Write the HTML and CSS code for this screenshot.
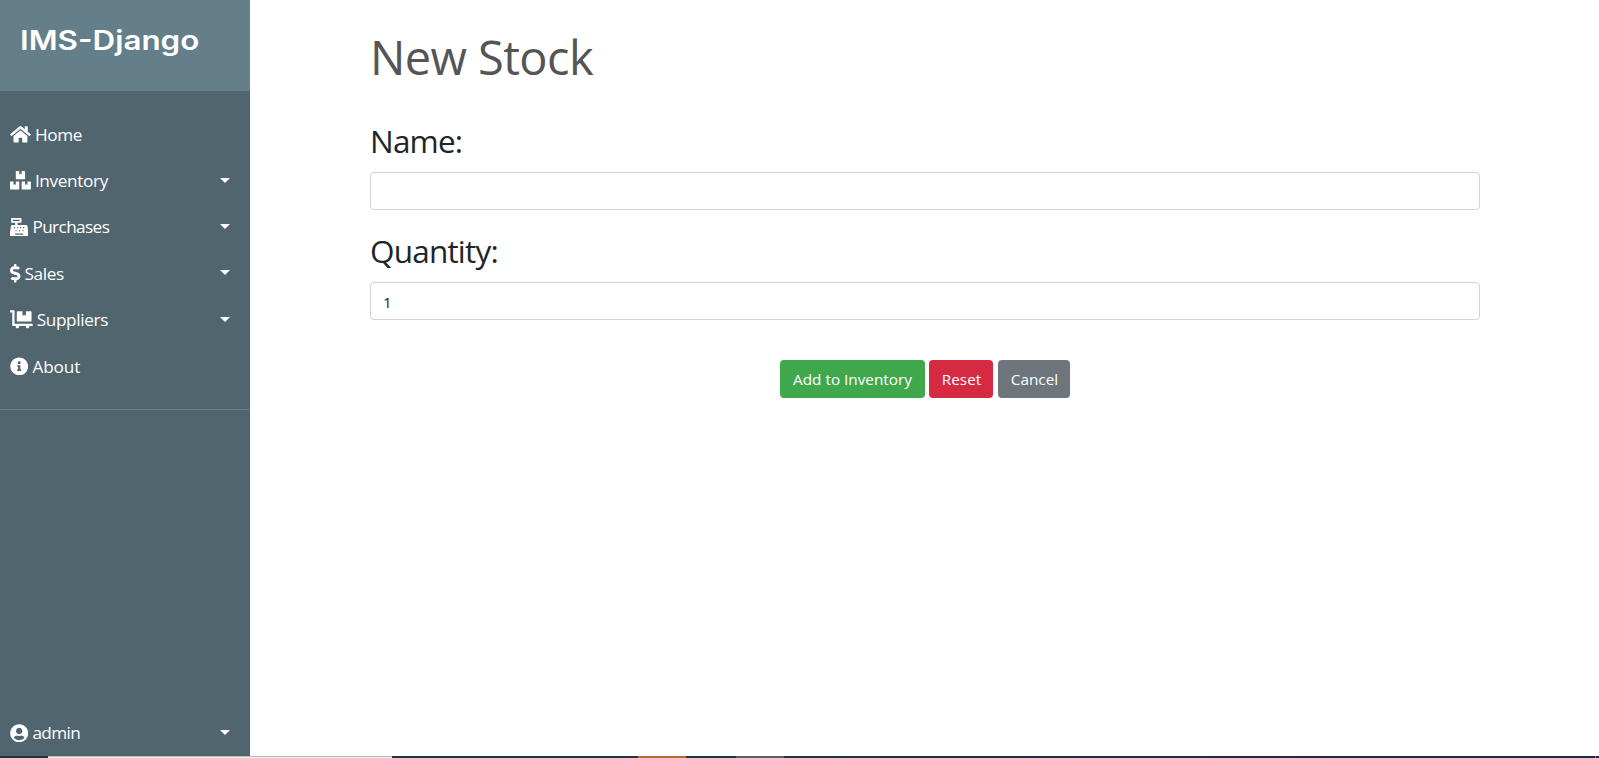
FILE: index.html
```html
<!DOCTYPE html>
<html lang="en">
<head>
<meta charset="utf-8">
<title>IMS-Django</title>
<link rel="stylesheet" href="styles.css">
</head>
<body>
<div class="wrapper">
  <nav class="sidebar">
    <header class="brand"><span class="brand-name">IMS-Django</span></header>
    <ul class="menu">
      <li><a><svg class="icon w20" viewBox="0 0 576 512"><path d="M280.37 148.26L96 300.11V464a16 16 0 0 0 16 16l112.06-.29a16 16 0 0 0 15.92-16V368a16 16 0 0 1 16-16h64a16 16 0 0 1 16 16v95.64a16 16 0 0 0 16 16.05L464 480a16 16 0 0 0 16-16V300L295.67 148.26a12.19 12.19 0 0 0-15.3 0zM571.6 251.47L488 182.56V44.05a12 12 0 0 0-12-12h-56a12 12 0 0 0-12 12v72.61L318.47 43a48 48 0 0 0-61 0L4.34 251.47a12 12 0 0 0-1.6 16.9l25.5 31A12 12 0 0 0 45.15 301l235.22-193.74a12.19 12.19 0 0 1 15.3 0L530.9 301a12 12 0 0 0 16.9-1.6l25.5-31a12 12 0 0 0-1.7-16.93z"/></svg><span>Home</span></a></li>
      <li><a><svg class="icon w20" viewBox="0 0 576 512"><path d="M560 288h-80v96l-32-21.3-32 21.3v-96h-80c-8.8 0-16 7.2-16 16v192c0 8.8 7.2 16 16 16h224c8.8 0 16-7.2 16-16V304c0-8.800-7.200-16-16-16zm-384-64h224c8.800 0 16-7.200 16-16V16c0-8.800-7.200-16-16-16h-80v96l-32-21.300L256 96V0h-80c-8.800 0-16 7.200-16 16v192c0 8.800 7.200 16 16 16zm64 64h-80v96l-32-21.300L96 384v-96H16c-8.800 0-16 7.200-16 16v192c0 8.800 7.200 16 16 16h224c8.800 0 16-7.200 16-16V304c0-8.800-7.200-16-16-16z"/></svg><span>Inventory</span><i class="caret"></i></a></li>
      <li><a><svg class="icon w18" viewBox="0 0 512 512"><path fill-rule="evenodd" d="M511 378.700l-26.700-160c-2.600-15.400-15.900-26.700-31.600-26.700H208v-64h96c8.800 0 16-7.200 16-16V16c0-8.800-7.200-16-16-16H48c-8.800 0-16 7.200-16 16v96c0 8.800 7.200 16 16 16h96v64H59.100c-15.600 0-29 11.300-31.600 26.700L.8 378.700c-.6 3.500-.9 7-.9 10.500V480c0 17.700 14.300 32 32 32h448c17.700 0 32-14.300 32-32v-90.700c.1-3.500-.2-7.100-.9-10.600zM280 248h32v32h-32zm-32 88h32v32h-32zM80 48h192v32H80zm32 200h32v32h-32zm40 88h32v32h-32zm216 120c0 4.400-3.600 8-8 8H152c-4.400 0-8-3.600-8-8v-16c0-4.400 3.600-8 8-8h208c4.400 0 8 3.600 8 8zM196 248h32v32h-32zm148 88h32v32h-32zm20-88h32v32h-32z"/></svg><span class="tight">Purchases</span><i class="caret"></i></a></li>
      <li><a><svg class="icon w10" viewBox="0 0 288 512"><path d="M209.200 233.400l-108-31.600C88.700 198.200 80 186.500 80 173.500c0-16.300 13.200-29.500 29.500-29.500h66.300c12.200 0 24.200 3.700 34.200 10.500 6.100 4.100 14.300 3.100 19.500-2l34.800-34c7.100-6.900 6.100-18.400-1.800-24.500C238 74.800 207.400 64.100 176 64V16c0-8.800-7.200-16-16-16h-32c-8.800 0-16 7.200-16 16v48h-2.500C45.800 64-5.400 118.700.5 183.600c4.200 46.100 39.400 83.600 83.800 96.600l102.500 30c12.500 3.700 21.200 15.300 21.200 28.300 0 16.300-13.200 29.500-29.500 29.500h-66.300C100 368 88 364.300 78 357.500c-6.100-4.100-14.300-3.100-19.500 2l-34.800 34c-7.100 6.900-6.100 18.400 1.800 24.500 24.500 19.200 55.100 29.900 86.500 30v48c0 8.800 7.200 16 16 16h32c8.800 0 16-7.200 16-16v-48.200c46.600-.9 90.300-28.600 105.700-72.700 21.500-61.600-14.600-124.800-72.500-141.700z"/></svg><span>Sales</span><i class="caret"></i></a></li>
      <li><a><svg class="icon w22" viewBox="0 0 640 512"><path d="M208 320h384c8.800 0 16-7.200 16-16V48c0-8.800-7.200-16-16-16H448v128l-48-32-48 32V32H208c-8.800 0-16 7.200-16 16v256c0 8.800 7.200 16 16 16zm416 64H128V16c0-8.800-7.200-16-16-16H16C7.200 0 0 7.200 0 16v32c0 8.800 7.200 16 16 16h48v368c0 8.800 7.200 16 16 16h82.900c-1.800 5-2.900 10.400-2.900 16 0 26.500 21.500 48 48 48s48-21.500 48-48c0-5.600-1.200-11-2.900-16H451c-1.800 5-2.900 10.400-2.900 16 0 26.500 21.500 48 48 48s48-21.500 48-48c0-5.600-1.200-11-2.900-16H624c8.800 0 16-7.200 16-16v-32c0-8.800-7.200-16-16-16z"/></svg><span>Suppliers</span><i class="caret"></i></a></li>
      <li><a><svg class="icon w18" viewBox="0 0 512 512"><path d="M256 8C119 8 8 119.100 8 256c0 137 111 248 248 248s248-111 248-248C504 119.100 393 8 256 8zm0 110c23.200 0 42 18.800 42 42s-18.800 42-42 42-42-18.800-42-42 18.800-42 42-42zm56 254c0 6.600-5.400 12-12 12h-88c-6.600 0-12-5.400-12-12v-24c0-6.600 5.400-12 12-12h12v-64h-12c-6.600 0-12-5.400-12-12v-24c0-6.600 5.400-12 12-12h64c6.600 0 12 5.400 12 12v100h12c6.600 0 12 5.400 12 12z"/></svg><span class="loose">About</span></a></li>
    </ul>
    <div class="account"><a><svg class="icon w18" viewBox="0 0 496 512"><path d="M248 8C111 8 0 119 0 256s111 248 248 248 248-111 248-248S385 8 248 8zm0 96c48.600 0 88 39.400 88 88s-39.400 88-88 88-88-39.400-88-88 39.400-88 88-88zm0 344c-58.700 0-111.300-26.600-146.500-68.200 18.800-35.400 55.600-59.800 98.500-59.800 2.400 0 4.800.4 7.100 1.100 13 4.200 26.600 6.900 40.900 6.900 14.300 0 28-2.700 40.900-6.900 2.300-.7 4.700-1.100 7.100-1.100 42.900 0 79.700 24.400 98.500 59.800C359.300 421.400 306.700 448 248 448z"/></svg><span>admin</span><i class="caret"></i></a></div>
  </nav>
  <main class="content">
    <h1 class="title">New Stock</h1>
    <form class="stock-form">
      <label class="label" for="name">Name:</label>
      <input class="field" id="name" type="text">
      <label class="label" for="qty">Quantity:</label>
      <input class="field" id="qty" type="text" value="1">
      <div class="actions">
        <button class="btn add" type="button">Add to Inventory</button>
        <button class="btn reset" type="button">Reset</button>
        <button class="btn cancel" type="button">Cancel</button>
      </div>
    </form>
  </main>
</div>
<footer class="taskbar"><i class="search"></i><i class="gap1"></i><i class="app-orange"></i><i class="gap2"></i><i class="app-gray"></i><i class="rest"></i><i class="peek"></i></footer>
</body>
</html>
```

FILE: styles.css
```css
* { box-sizing: border-box; }
body { margin: 0; width: 1599px; height: 758px; overflow: hidden; background: #fff; font-family: "Open Sans", "Noto Sans", sans-serif; color: #212529; }
.wrapper { display: flex; height: 756px; }
.sidebar { width: 250px; flex: none; display: flex; flex-direction: column; background: #51656f; color: #fff; }
.brand { height: 91px; padding: 20px 20px 20px 20px; background: #647f8a; }
.brand-name { display: inline-block; white-space: nowrap; font: 600 27.500px/41px Inter, sans-serif; transform: scaleX(1.14); transform-origin: 0 50%; }
.menu { margin: 0; padding: 20px 0; list-style: none; border-bottom: 1px solid #647f8a; }
.menu a, .account a { display: flex; align-items: center; height: 46.400px; padding: 0 20px 0 10px; font-size: 17.200px; white-space: nowrap; }
.icon { height: 18.600px; margin-right: 4px; flex: none; fill: #fff; }
.w20 { width: 20.900px; }
.w18 { width: 18.400px; }
.w10 { width: 10.500px; }
.w22 { width: 22.700px; }
.caret { margin: -1px 0 0 auto; border-top: 5px solid #fff; border-left: 5px solid transparent; border-right: 5px solid transparent; }
.account { margin-top: auto; }
.menu span { letter-spacing: -0.350px; }
.account span { letter-spacing: -0.600px; }
.menu .tight { letter-spacing: -0.600px; }
.menu .loose { letter-spacing: -0.100px; }
.content { flex: 1; padding: 22px 119px 0 120px; }
.title { margin: 0; height: 97px; font-size: 47px; line-height: 71px; font-weight: 400; letter-spacing: -0.600px; color: #555; }
.stock-form { display: flex; flex-direction: column; }
.label { height: 52px; font-size: 31.500px; line-height: 44px; font-weight: 400; letter-spacing: -0.800px; }
.field { height: 38px; margin: 1px 0 19px; padding: 2px 12px 0; border: 1px solid #ced4da; border-radius: 4px; background: #fff; font: 15.300px "Open Sans", sans-serif; color: #212529; outline: 0; }
.actions { display: flex; justify-content: center; margin-top: 21px; }
.btn { height: 38px; padding: 0 0 1px 1px; border: 0; border-radius: 4px; font: 15.300px "Open Sans", sans-serif; color: #fff; white-space: nowrap; }
.add { width: 145px; margin-right: 4px; padding-left: 0; background: #3fa84c; }
.reset { width: 64px; margin-right: 5px; background: #d62a43; }
.cancel { width: 72px; background: #6e757d; }
.taskbar { display: flex; height: 2px; padding-left: 48px; background: #20343f; }
.search { width: 344px; border-top: 1px solid #b8b8b8; background: #f2f2f2; }
.gap1 { width: 246px; }
.app-orange { width: 48px; background: #b06e36; }
.gap2 { width: 50px; }
.app-gray { width: 48px; background: #52616b; }
.rest { flex: 1; background: linear-gradient(90deg, #20343f, #1c2848 70%); }
.peek { width: 4px; border-left: 1px solid #7a8296; background: #1c2848; }
```
